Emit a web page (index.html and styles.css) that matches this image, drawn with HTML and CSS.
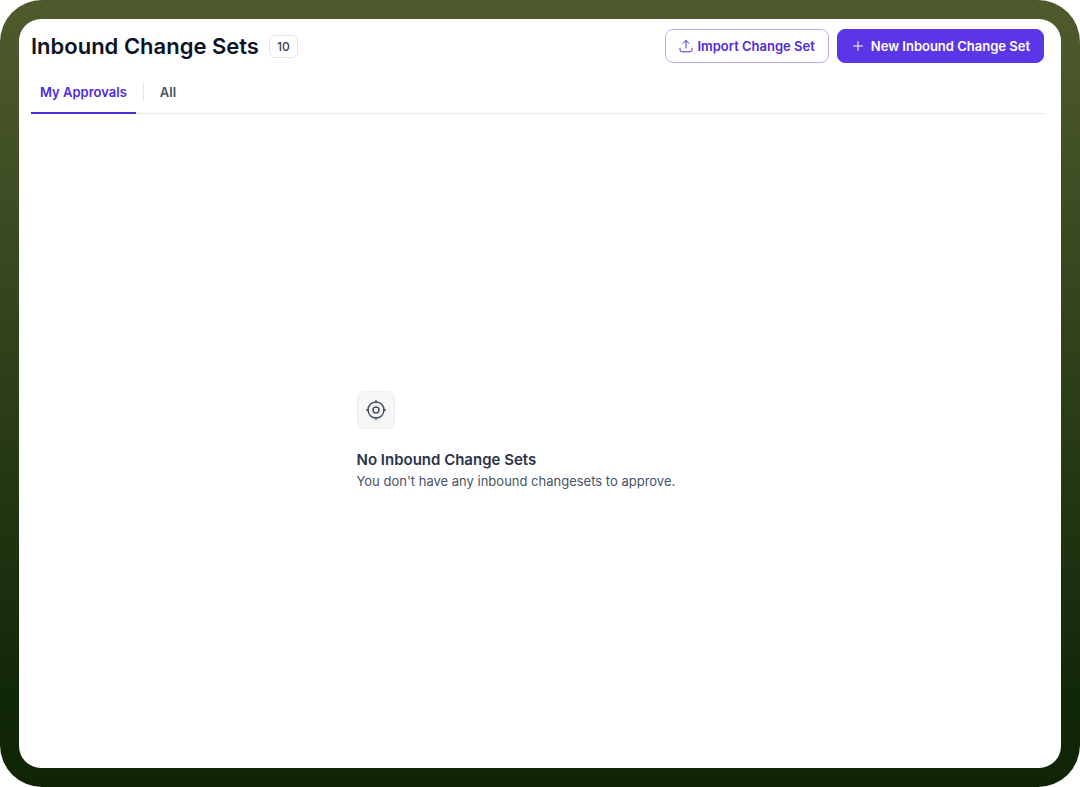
FILE: index.html
```html
<!DOCTYPE html>
<html lang="en">
<head>
    <meta charset="UTF-8">
    <meta name="viewport" content="width=device-width, initial-scale=1.0">
    <title>Inbound Change Sets</title>
    <link rel="stylesheet" href="styles.css">
</head>
<body>
    <div class="frame">
        <main class="panel">
            <header class="page-header">
                <h1>Inbound Change Sets</h1>
                <span class="count-badge">10</span>
                <div class="actions">
                    <button type="button" class="button button-outline">
                        <svg class="upload-icon" viewBox="0 0 14 14" aria-hidden="true">
                            <path d="M7 9V1.5M4 4.4L7 1.4L10 4.4M1 9.2V10.8A2 2 0 0 0 3 12.8H11A2 2 0 0 0 13 10.8V9.2"/>
                        </svg>
                        Import Change Set
                    </button>
                    <button type="button" class="button button-primary">
                        <svg class="plus-icon" viewBox="0 0 14 14" aria-hidden="true">
                            <path d="M7 2.5V11.5M2.5 7H11.5"/>
                        </svg>
                        New Inbound Change Set
                    </button>
                </div>
            </header>

            <nav class="tabs">
                <a href="#my-approvals" class="tab active" aria-current="page">My Approvals</a>
                <span class="tab-divider"></span>
                <a href="#all" class="tab">All</a>
            </nav>

            <section class="empty-area">
                <div class="empty-state">
                    <div class="empty-icon">
                        <svg viewBox="0 0 20 20" aria-hidden="true">
                            <circle cx="10" cy="10" r="8"/>
                            <circle cx="10" cy="10" r="3"/>
                            <path d="M10 0.7V2.5M10 17.5V19.3M0.7 10H2.5M17.5 10H19.3"/>
                        </svg>
                    </div>
                    <h2>No Inbound Change Sets</h2>
                    <p>You don't have any inbound changesets to approve.</p>
                </div>
            </section>
        </main>
    </div>
</body>
</html>
```
FILE: styles.css
```css
:root {
    --primary-color: #5b36e8;
    --primary-text: #4f2bdc;
    --primary-border: #b9acf5;
    --border-color: #e9eaf1;
    --heading-color: #0b1427;
    --text-color: #475467;
}

* {
    box-sizing: border-box;
}

body {
    margin: 0;
    background: #fff;
    color: var(--text-color);
    font-family: Inter, sans-serif;
    font-size: 13px;
}

h1, h2, p {
    margin: 0;
}

svg {
    display: block;
    flex: none;
    fill: none;
    stroke: currentColor;
    stroke-linecap: round;
    stroke-linejoin: round;
}

.frame {
    display: flex;
    min-height: 100vh;
    padding: 19px;
    border-radius: 42px;
    background: linear-gradient(180deg, #4d5a2c 0%, #4a572a 8%, #112808 88%, #0f2506 100%);
}

.panel {
    display: flex;
    flex: 1;
    flex-direction: column;
    padding: 10px 17px 0 12px;
    border-radius: 22px;
    background: #fff;
}

.page-header {
    display: flex;
    align-items: center;
}

h1 {
    color: var(--heading-color);
    font-size: 22px;
    font-weight: 600;
    line-height: 32px;
}

.count-badge {
    margin-left: 10px;
    padding: 0 7px;
    border: 1px solid #e2e4ed;
    border-radius: 6px;
    color: #344054;
    font-size: 12px;
    font-weight: 500;
    line-height: 21px;
}

.actions {
    display: flex;
    gap: 8px;
    margin-left: auto;
}

.button {
    display: flex;
    align-items: center;
    height: 34px;
    padding: 0 13px;
    border: 1px solid var(--primary-color);
    border-radius: 8px;
    font: 600 13px Inter, sans-serif;
    cursor: pointer;
}

.button-outline {
    gap: 4px;
    border-color: var(--primary-border);
    background: #fff;
    color: var(--primary-text);
}

.button-primary {
    gap: 6px;
    background: var(--primary-color);
    color: #fff;
}

.upload-icon, .plus-icon {
    width: 14px;
    height: 14px;
}

.tabs {
    display: flex;
    align-items: flex-start;
    margin-top: 15px;
    border-bottom: 1px solid var(--border-color);
}

.tab {
    margin-bottom: -1px;
    padding: 5px 9px 11px;
    border-bottom: 2px solid transparent;
    color: var(--text-color);
    font-weight: 600;
    line-height: 18px;
    text-decoration: none;
}

.tab.active {
    border-color: var(--primary-text);
    color: var(--primary-text);
}

.tab-divider {
    width: 1px;
    height: 19px;
    margin: 4px 7px 0;
    background: #e6e7ef;
}

.empty-area {
    display: flex;
    flex: 1;
    align-items: center;
    justify-content: center;
}

.empty-state {
    width: 362px;
}

.empty-icon {
    display: flex;
    align-items: center;
    justify-content: center;
    width: 38px;
    height: 38px;
    margin-bottom: 20px;
    border: 1px solid #eceef4;
    border-radius: 7px;
    background: #f6f7f9;
    color: #414d62;
}

.empty-icon svg {
    width: 20px;
    height: 20px;
    stroke-width: 1.4;
}

h2 {
    color: #2a344a;
    font-size: 15px;
    font-weight: 600;
    line-height: 22px;
}

.empty-state p {
    line-height: 20px;
}
```
